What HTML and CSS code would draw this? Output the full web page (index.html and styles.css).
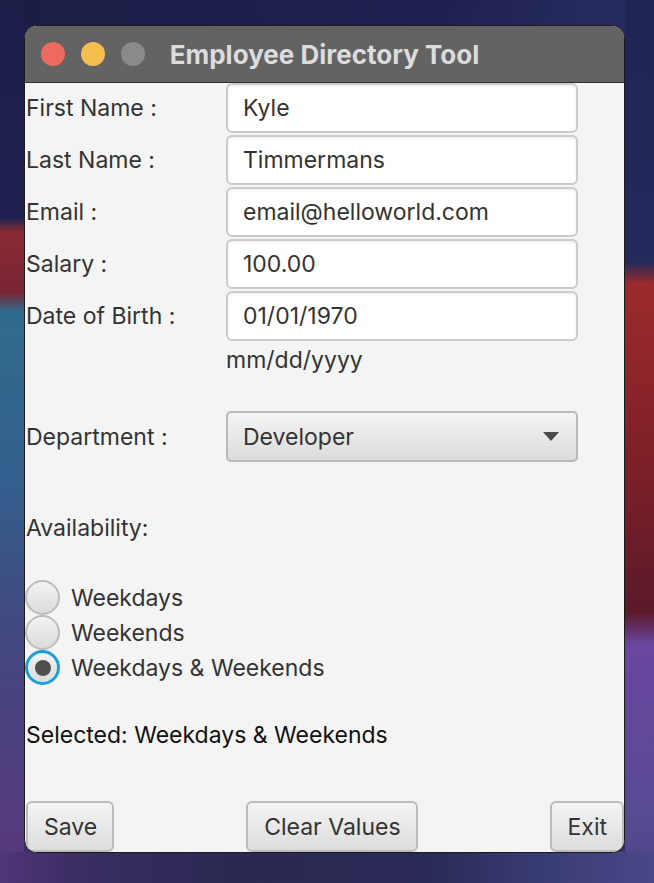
FILE: index.html
```html
<!DOCTYPE html>
<html lang="en">
<head>
<meta charset="utf-8">
<title>Employee Directory Tool</title>
<link rel="stylesheet" href="styles.css">
</head>
<body>
<div class="window">
  <div class="titlebar">
    <div class="lights">
      <span class="light red"></span>
      <span class="light yellow"></span>
      <span class="light gray"></span>
    </div>
    <div class="title">Employee Directory Tool</div>
    <div class="spacer"></div>
  </div>
  <div class="content">
    <div class="form">
      <label class="lbl">First Name :</label>
      <input class="field" type="text" value="Kyle">
      <label class="lbl">Last Name :</label>
      <input class="field" type="text" value="Timmermans">
      <label class="lbl">Email :</label>
      <input class="field" type="text" value="email@helloworld.com">
      <label class="lbl">Salary :</label>
      <input class="field" type="text" value="100.00">
      <label class="lbl">Date of Birth :</label>
      <input class="field" type="text" value="01/01/1970">
      <div class="hint">mm/dd/yyyy</div>
      <label class="lbl dept-lbl">Department :</label>
      <div class="combo">
        <span>Developer</span>
        <svg class="arrow" width="16" height="9" viewBox="0 0 16 9"><path d="M0 0 H16 L8 9 Z" fill="#4a4a4a"/></svg>
      </div>
    </div>
    <div class="avail">Availability:</div>
    <div class="radios">
      <div class="radio"><span class="dot"></span><span>Weekdays</span></div>
      <div class="radio"><span class="dot"></span><span>Weekends</span></div>
      <div class="radio"><span class="dot on"></span><span>Weekdays &amp; Weekends</span></div>
    </div>
    <div class="selected">Selected: Weekdays &amp; Weekends</div>
    <div class="buttons">
      <div class="btn">Save</div>
      <div class="btn">Clear Values</div>
      <div class="btn">Exit</div>
    </div>
  </div>
</div>
</body>
</html>
```
FILE: styles.css
```css
* { box-sizing: border-box; }
html, body { height: 100%; }
body {
  margin: 0;
  padding: 25px 29px 30px 24px;
  font-family: Inter, "Noto Sans", sans-serif;
  background:
    linear-gradient(to right, #50357a 0, #3a2d62 12%, #2b2953 35%, #2a2a56 65%, #3b3d78 85%, #4a4787 100%) left bottom / 100% 31px no-repeat,
    linear-gradient(to bottom, #1c1e48 0, #1e2150 218px, #8a2a33 232px, #7a2535 292px, #2f6b8c 312px, #335f8e 480px, #43477f 640px, #553a80 830px, #50357a 883px) left top / 24px 100% no-repeat,
    linear-gradient(to bottom, #202454 0, #242a5c 262px, #9c2a2c 284px, #7c1f27 470px, #5b1a2a 612px, #6a46a0 645px, #5a4a95 800px, #4a4787 883px) right top / 29px 100% no-repeat,
    linear-gradient(to bottom, transparent 0, transparent 820px, #3a3066 850px, #3a3066 883px),
    linear-gradient(100deg, #1b1d45 0%, #1e2150 55%, #272b5e 75%, #202454 100%);
}
.window {
  width: 601px;
  height: 828px;
  border: 1px solid #1a1a1a;
  border-radius: 13px;
  overflow: hidden;
  display: flex;
  flex-direction: column;
  background: #f4f4f4;
}
.titlebar {
  height: 57px;
  flex: none;
  background: #636363;
  border-bottom: 1px solid #2e2e2e;
  display: grid;
  grid-template-columns: 1fr auto 1fr;
  align-items: center;
}
.lights { display: flex; gap: 16px; padding-left: 16px; }
.light { width: 24px; height: 24px; border-radius: 50%; }
.red { background: #ee6a5e; }
.yellow { background: #f6be4f; }
.gray { background: #8a8a8a; }
.title {
  color: #dcdcdc;
  font-weight: 700;
  font-size: 26px;
}
.content {
  flex: 1;
  display: flex;
  flex-direction: column;
  padding-left: 1px;
  color: #333;
  font-size: 23px;
}
.form {
  display: grid;
  grid-template-columns: 200px 352px;
  grid-template-rows: repeat(5, 50px) 30px 87px;
  row-gap: 2px;
}
.lbl { align-self: center; line-height: 26px; }
.field {
  width: 352px;
  height: 50px;
  border: 2px solid #cbcbcb;
  border-radius: 6px;
  background: #fff;
  box-shadow: inset 0 2px 3px rgba(0,0,0,0.06);
  font: inherit;
  color: #333;
  padding: 0 0 0 15px;
  outline: none;
}
.hint {
  grid-column: 2;
  grid-row: 6;
  line-height: 26px;
  height: 26px;
  margin-top: 4px;
  align-self: start;
}
.dept-lbl { grid-row: 7; align-self: end; margin-bottom: 12px; }
.combo {
  grid-row: 7;
  grid-column: 2;
  align-self: end;
  height: 51px;
  border: 2px solid #b9b9b9;
  border-radius: 5px;
  background: linear-gradient(to bottom, #f4f4f4, #dcdcdc);
  display: flex;
  align-items: center;
  justify-content: space-between;
  padding: 0 17px 0 15px;
}
.avail { line-height: 26px; margin-top: 53px; }
.radios { margin-top: 39px; display: flex; flex-direction: column; margin-left: -1px; }
.radio { height: 35px; display: flex; align-items: center; gap: 11px; }
.dot {
  width: 35px; height: 35px; border-radius: 50%;
  border: 2px solid #bcbcbc;
  background: linear-gradient(to bottom, #f4f4f4, #dadada);
  display: flex; align-items: center; justify-content: center;
  flex: none;
}
.dot.on {
  border: 3px solid #1b9fd9;
  box-shadow: inset 0 0 0 1px #dbeef6;
}
.dot.on::after {
  content: "";
  width: 16px; height: 16px; border-radius: 50%;
  background: #505050;
}
.selected { color: #111; line-height: 26px; margin-top: 37px; }
.buttons {
  margin-top: auto;
  display: flex;
  justify-content: space-between;
}
.btn {
  height: 51px;
  border: 2px solid #bcbcbc;
  border-radius: 6px;
  background: linear-gradient(to bottom, #f4f4f4, #dcdcdc);
  padding: 0 15px 0 16px;
  display: flex;
  align-items: center;
  color: #333;
}
```
